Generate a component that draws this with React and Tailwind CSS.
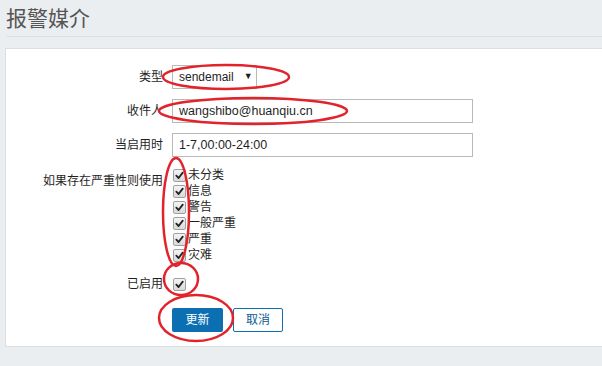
import React from "react";

const font = { fontFamily: '"Liberation Sans", "Noto Sans CJK SC", sans-serif' };

function Check() {
  return (
    <span className="inline-flex h-[13px] w-[13px] shrink-0 items-center justify-center rounded-[2px] border border-[#a0a0a0] bg-gradient-to-b from-[#f4f4f4] to-[#d9d9d9]">
      <svg width="9" height="9" viewBox="0 0 10 10">
        <path d="M1.5 5.2 L4 7.8 L8.6 1.8" fill="none" stroke="#222" strokeWidth="2" strokeLinecap="round" strokeLinejoin="round" />
      </svg>
    </span>
  );
}

function Label({ children, className = "" }) {
  return <div className={"text-right text-[12px] text-[#1f1f1f] " + className}>{children}</div>;
}

export default function App() {
  const severities = ["未分类", "信息", "警告", "一般严重", "严重", "灾难"];
  return (
    <div className="relative h-[366px] w-[602px] overflow-hidden bg-[#ebeef0]" style={font}>
      <div className="ml-[6px] h-[37px] border-b border-[#dde1e4]">
        <div className="pt-[6px] text-[21px] leading-[26px] text-[#555]">报警媒介</div>
      </div>
      <div className="mt-[11px] ml-[5px] border border-r-0 border-[#dcdfe2] bg-white pt-[16px] pb-[14px]">
        <div className="grid grid-cols-[157px_1fr] items-center gap-x-[9px]">
          <Label>类型</Label>
          <div className="flex h-[24px] w-[85px] items-center border border-[#b8b8b8] bg-white pl-[6px] text-[12px] text-[#1f1f1f]">
            <span>sendemail</span>
            <span className="ml-[10px] text-[9px]">▼</span>
          </div>

          <Label className="mt-[10px]">收件人</Label>
          <div className="mt-[10px] flex h-[24px] w-[301px] items-center border border-[#b8b8b8] pl-[6px] text-[12.5px] text-[#1f1f1f]">
            wangshibo@huanqiu.cn
          </div>

          <Label className="mt-[10px]">当启用时</Label>
          <div className="mt-[10px] flex h-[24px] w-[301px] items-center border border-[#b8b8b8] pl-[6px] text-[12.5px] text-[#1f1f1f]">
            1-7,00:00-24:00
          </div>

          <Label className="mt-[10px] self-start pt-[5px]">如果存在严重性则使用</Label>
          <div className="mt-[10px] flex flex-col">
            {severities.map((s) => (
              <div key={s} className="flex h-[16px] items-center">
                <span className="ml-[1px]"><Check /></span>
                <span className="ml-[2px] text-[12px] text-[#1f1f1f]">{s}</span>
              </div>
            ))}
          </div>

          <Label className="mt-[12px]">已启用</Label>
          <div className="mt-[12px] flex h-[16px] items-center">
            <span className="ml-[1px]"><Check /></span>
          </div>

          <div />
          <div className="mt-[15px] flex gap-[10px]">
            <button className="h-[24px] w-[51px] rounded-[2px] bg-[#0b6fb2] text-[12px] text-white">更新</button>
            <button className="h-[24px] w-[50px] rounded-[2px] border border-[#0b6fb2] bg-white text-[12px] text-[#0b5a91]">取消</button>
          </div>
        </div>
      </div>

      <svg className="pointer-events-none absolute left-0 top-0" width="602" height="366">
        <g fill="none" stroke="#e3232b" strokeWidth="2.5">
          <ellipse cx="226" cy="77" rx="63" ry="12" />
          <ellipse cx="253" cy="111" rx="94" ry="13" />
          <ellipse cx="176" cy="212" rx="13" ry="54" />
          <ellipse cx="181" cy="279" rx="17" ry="16" />
          <ellipse cx="196" cy="318" rx="37" ry="23" />
        </g>
      </svg>
    </div>
  );
}
